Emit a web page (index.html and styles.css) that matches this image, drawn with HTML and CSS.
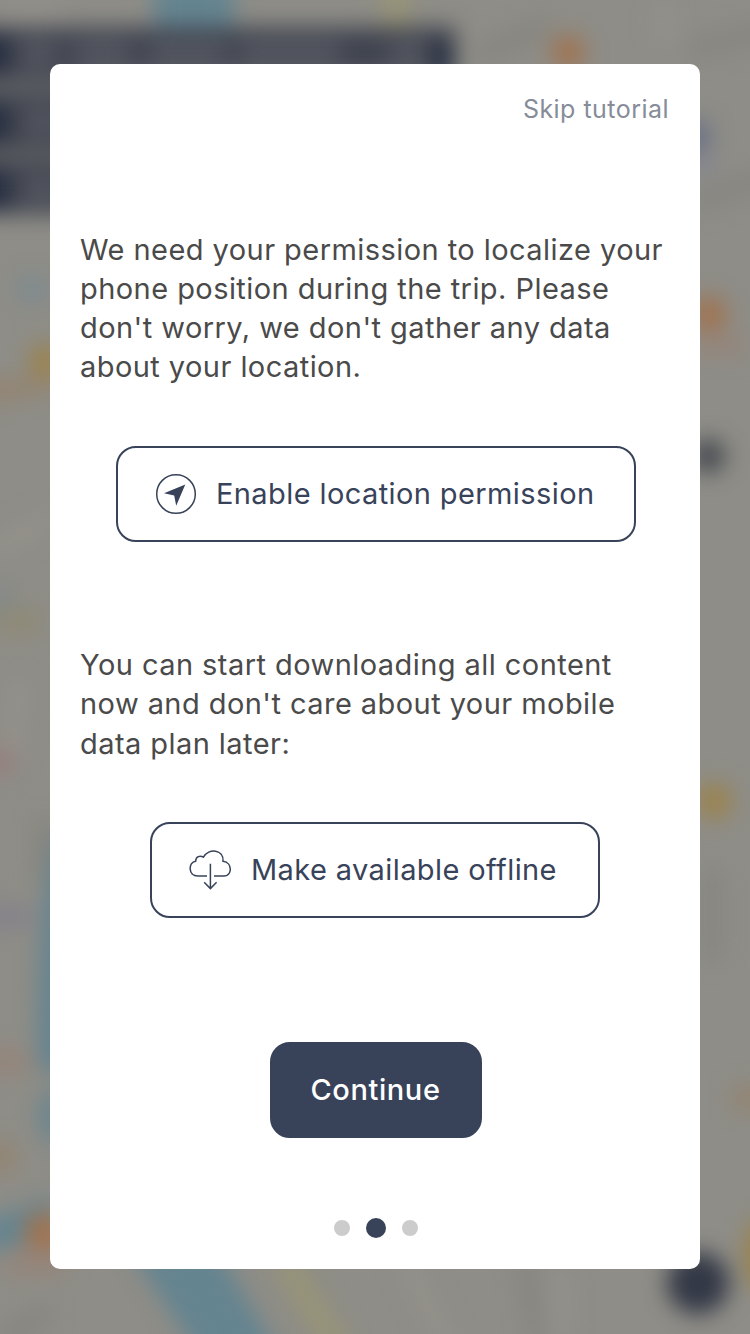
FILE: index.html
```html
<!DOCTYPE html>
<html lang="en">
<head>
<meta charset="utf-8">
<title>Tutorial</title>
<link rel="stylesheet" href="styles.css">
</head>
<body>
<svg class="map" viewBox="0 0 750 1334" aria-hidden="true">
  <defs>
    <filter id="soft" x="-100" y="-100" width="950" height="1534" filterUnits="userSpaceOnUse" color-interpolation-filters="sRGB"><feGaussianBlur stdDeviation="11"/></filter>
  </defs>
  <rect width="750" height="1334" fill="#8e8d87"/>
  <g filter="url(#soft)">
    <!-- streets and blocks -->
    <g fill="none" stroke="#86857f" stroke-width="18">
      <path d="M480 55L550 25M690 50L770 30M690 205L770 175M0 1340L50 1310M525 1260L540 1340"/>
      <path d="M44 820V880M712 870V960"/>
    </g>
    <g fill="none" stroke="#94918b" stroke-width="20">
      <path d="M0 15H60M665 0V45M-10 550L50 520M560 1270V1340M405 1260L450 1350M20 680L10 760"/>
    </g>
    <!-- river -->
    <path fill="#648490" d="M154-30H234V50H154ZM60 830C45 880 38 930 38 1070H90V830ZM60 1085C35 1095 30 1130 60 1150ZM60 1195L-20 1222V1252L22 1245L50 1215ZM130 1250H218L285 1365H205Z"/>
    <path fill="none" stroke="#989477" stroke-width="26" d="M396-30V35M283 1260L340 1350"/>
    <!-- labels and markers -->
    <path fill="#414550" d="M-30 27H455V77H-30ZM-30 96H80V147H-30ZM-30 163H80V214H-30Z"/>
    <path fill="#606265" d="M-30 77H80V96H-30ZM-30 147H80V163H-30Z"/>
    <path fill="none" stroke="#565962" stroke-width="22" d="M22 53H55M75 53H130M150 53H225M240 53H340M390 53H425M25 122H60M25 190H60"/>
    <path fill="#252d40" d="M-35 34H8V74H-35ZM-35 104H8V142H-35ZM-35 170H8V210H-35ZM434 40H452V80H434Z"/>
    <g fill="#a07350">
      <circle cx="568" cy="52" r="17"/><circle cx="709" cy="314" r="18"/><circle cx="44" cy="1232" r="20"/>
    </g>
    <g fill="#95857a">
      <ellipse cx="720" cy="345" rx="28" ry="11"/><ellipse cx="5" cy="1062" rx="30" ry="13"/><ellipse cx="35" cy="1262" rx="35" ry="14"/>
    </g>
    <g fill="#9b834d">
      <circle cx="46" cy="361" r="17"/><circle cx="714" cy="801" r="18"/><ellipse cx="762" cy="1255" rx="18" ry="36"/>
    </g>
    <g fill="#94846f">
      <path d="M-20 381L55 377V391L-20 405Z"/><circle cx="0" cy="1157" r="16"/><ellipse cx="750" cy="1098" rx="20" ry="12"/>
    </g>
    <ellipse cx="18" cy="621" rx="25" ry="13" fill="#908a74"/>
    <ellipse cx="0" cy="601" rx="12" ry="12" fill="#7f888a"/>
    <ellipse cx="32" cy="289" rx="17" ry="13" fill="#7c8b90"/>
    <circle cx="0" cy="761" r="14" fill="#967d7d"/>
    <ellipse cx="5" cy="917" rx="30" ry="11" fill="#84808b"/>
    <circle cx="694" cy="136" r="17" fill="#687086"/>
    <circle cx="704" cy="165" r="12" fill="#858590"/>
    <circle cx="708" cy="456" r="17" fill="#45494f"/>
    <circle cx="698" cy="1283" r="31" fill="#333846"/>
  </g>
</svg>

<main class="card">
  <a class="skip">Skip tutorial</a>
  <p class="copy copy-location">We need your permission to localize your<br>phone position during the trip. Please<br>don't worry, we don't gather any data<br>about your location.</p>
  <button class="button button-location">
    <svg class="icon" width="42" height="42" viewBox="0 0 42 42">
      <circle cx="21" cy="21" r="19.3" fill="none" stroke="currentColor" stroke-width="1.5"/>
      <path d="M30.3 11.5L9 20.3L19.2 22.6L21.2 32.7Z" fill="currentColor"/>
    </svg>
    <span>Enable location permission</span>
  </button>
  <p class="copy copy-offline">You can start downloading all content<br>now and don't care about your mobile<br>data plan later:</p>
  <button class="button button-offline">
    <svg class="icon" width="44" height="42" viewBox="0 0 44 42" fill="none" stroke="currentColor" stroke-width="1.5">
      <path d="M18 27.1H8.9C-1.1 27.1-1 12.9 6.6 12.2C6.8 7.8 10.8 5.8 14.4 8.2C19.5-1.2 35.2.3 34 12.3C44.2 13.8 43 27.1 35 27.1H25"/>
      <path d="M21.4 14.8V39.6M15.2 33.2L21.4 39.6L27.6 33.2"/>
    </svg>
    <span>Make available offline</span>
  </button>
  <button class="button button-continue"><span>Continue</span></button>
  <nav class="dots">
    <span class="dot"></span><span class="dot dot-active"></span><span class="dot"></span>
  </nav>
</main>
</body>
</html>
```
FILE: styles.css
```css
* { box-sizing: border-box; }

body {
  margin: 0;
  height: 1334px;
  padding: 64px 50px 65px;
  overflow: hidden;
  font-family: Inter, "Liberation Sans", sans-serif;
}

.map {
  position: absolute;
  inset: 0;
  width: 750px;
  height: 1334px;
}

.card {
  position: relative;
  display: flex;
  flex-direction: column;
  align-items: center;
  height: 1205px;
  padding: 29px 30px 31px;
  border-radius: 10px;
  background: #fff;
}

.skip {
  align-self: flex-end;
  padding-right: 1px;
  font-size: 25px;
  line-height: 32px;
  letter-spacing: 0.47px;
  color: #868c98;
}

.copy {
  align-self: stretch;
  margin: 0;
  font-size: 29px;
  line-height: 39px;
  letter-spacing: 0.44px;
  color: #4a4a4a;
  white-space: nowrap;
}

.copy-location { margin-top: 105px; }
.copy-offline { margin-top: 103px; line-height: 39.3px; }

.button {
  display: flex;
  align-items: center;
  height: 96px;
  padding: 0;
  border: 2px solid #38435a;
  border-radius: 20px;
  background: #fff;
  color: #38435a;
  font: 400 29px/36px Inter, "Liberation Sans", sans-serif;
  letter-spacing: 0.4px;
  white-space: nowrap;
}

.button-location {
  width: 520px;
  margin: 60px 0 0 2px;
  padding-left: 37px;
  gap: 19px;
}

.button-offline {
  width: 450px;
  margin-top: 59px;
  padding-left: 37px;
  gap: 18px;
}

.button-continue {
  justify-content: center;
  width: 212px;
  margin: 124px 0 0 2px;
  padding-right: 1px;
  background: #38435a;
  color: #fff;
  font-weight: 500;
  letter-spacing: 0.6px;
}

.icon { flex: none; }

.dots {
  display: flex;
  align-items: center;
  gap: 16px;
  margin: 80px 0 0 2px;
}

.dot {
  width: 16px;
  height: 16px;
  border-radius: 50%;
  background: #ccc;
}

.dot-active {
  width: 20px;
  height: 20px;
  background: #38435a;
}
```
